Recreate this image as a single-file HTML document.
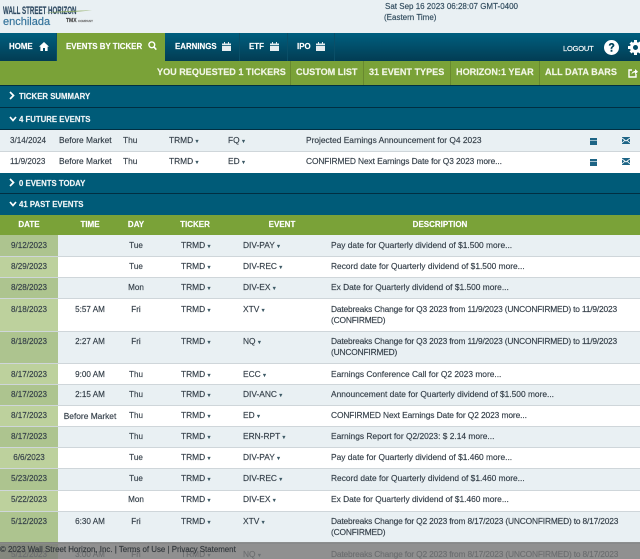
<!DOCTYPE html>
<html><head><meta charset="utf-8"><style>
html,body{margin:0;padding:0;background:#e9f0f3}
#p{position:relative;width:640px;height:559px;overflow:hidden;background:#e9f0f3;font-family:"Liberation Sans",sans-serif;font-size:8.4px;color:#333e48;filter:blur(.3px)}
#p div,#p span,#p svg{position:absolute}
span{white-space:nowrap;line-height:10px;-webkit-text-stroke:.15px}
.tab{top:33px;height:28px;background:linear-gradient(#005f7f,#023c53);border-right:1px solid #0a4f68;box-sizing:border-box}
.w{color:#fff;font-weight:bold;font-size:7.9px;margin-top:1px}
.g{color:#f2f6e6;font-weight:bold;font-size:9.1px;top:67px}
.sep{top:61px;width:1px;height:24px;background:#68892f}
.bar{left:0;width:640px;background:#005b78;border-bottom:1px solid #012f42;border-top:1px solid #012f42;box-sizing:border-box}
.bt{left:19px;color:#f0f5f7;font-weight:bold;font-size:7.8px;margin-top:1px}
.r{left:0;width:640px;box-sizing:border-box;border-bottom:1px solid #cfd6da}
.a{background:#e9f0f3}.b{background:#fff}
.d{left:0;width:58px;box-sizing:border-box}
.da{background:#adc48f}.db{background:#bdd19d}
.c{transform:translateX(-50%);font-size:8.1px;margin-top:1px}
.t{color:#fff;font-weight:bold;top:220px;font-size:8px;transform:translateX(-50%)}
.m{color:#3d5a66;font-size:6px}
.l{letter-spacing:-.17px}
.k{letter-spacing:-.1px}
.n{font-size:8.1px;margin-top:1px}
</style></head><body><div id="p">

<span style="left:3px;top:6px;font-size:11px;font-weight:bold;color:#2f4a62;transform:scaleX(.56);transform-origin:0 0;line-height:11px">WALL STREET HORIZON</span>
<svg style="left:44px;top:9px" width="50" height="5" viewBox="0 0 50 5"><path d="M0 3.5C15 2.5 35 1.5 48 1.5C35 2.5 20 3.5 0 3.5Z" fill="#8aa85a"/></svg>
<span style="left:3px;top:16px;font-size:11px;color:#33729a;line-height:12px">enchilada</span>
<span style="left:66px;top:18px;font-size:5px;color:#444;font-weight:bold;line-height:6px">TMX</span>
<span style="left:78px;top:19px;font-size:3px;color:#666;line-height:4px">COMPANY</span>

<span style="left:385px;top:2px;color:#2f4a5c;font-size:8px">Sat Sep 16 2023 06:28:07 GMT-0400</span>
<span style="left:384px;top:13px;color:#2f4a5c;font-size:8px">(Eastern Time)</span>

<div class="tab" style="left:0;width:640px;border:0"></div>
<div class="tab" style="left:0;width:57px"></div>
<div class="tab" style="left:165px;width:75px"></div>
<div class="tab" style="left:240px;width:48px"></div>
<div class="tab" style="left:288px;width:47px"></div>
<div style="left:57px;top:33px;width:108px;height:28px;background:#7aa238"></div>

<span class="w" style="left:9px;top:41px">HOME</span>
<svg style="left:39px;top:42px" width="10" height="9" viewBox="0 0 10 9"><path d="M5 0L10 4.6H8.6V9H6V6H4V9H1.4V4.6H0Z" fill="#fff"/></svg>
<span class="w" style="left:66px;top:41px">EVENTS BY TICKER</span>
<svg style="left:148px;top:41px" width="9" height="10" viewBox="0 0 9 10"><circle cx="3.8" cy="3.8" r="2.9" fill="none" stroke="#fff" stroke-width="1.4"/><path d="M5.8 5.8L8.3 8.6" stroke="#fff" stroke-width="1.6"/></svg>
<span class="w" style="left:175px;top:41px">EARNINGS</span>
<svg style="left:222px;top:42px" width="9" height="9" viewBox="0 0 9 9"><path d="M0 1.5H9V3.2H0ZM0 4H9V9H0ZM2 0H3V1.5H2ZM6 0H7V1.5H6Z" fill="#e6edf0"/></svg>
<span class="w" style="left:249px;top:41px">ETF</span>
<svg style="left:270px;top:42px" width="9" height="9" viewBox="0 0 9 9"><path d="M0 1.5H9V3.2H0ZM0 4H9V9H0ZM2 0H3V1.5H2ZM6 0H7V1.5H6Z" fill="#e6edf0"/></svg>
<span class="w" style="left:297px;top:41px">IPO</span>
<svg style="left:316px;top:42px" width="9" height="9" viewBox="0 0 9 9"><path d="M0 1.5H9V3.2H0ZM0 4H9V9H0ZM2 0H3V1.5H2ZM6 0H7V1.5H6Z" fill="#e6edf0"/></svg>

<span style="left:563px;top:44px;color:#fff;font-size:7.5px;letter-spacing:-.2px">LOGOUT</span>
<svg style="left:604px;top:40px" width="15" height="15" viewBox="0 0 15 15"><circle cx="7.5" cy="7.5" r="7.5" fill="#fff"/><path d="M4.8 5.6C4.9 3.8 6.1 3 7.6 3C9.2 3 10.4 4 10.4 5.3C10.4 7.2 8.3 7 8.3 8.9H6.6C6.6 6.4 8.5 6.5 8.5 5.4C8.5 4.9 8.1 4.6 7.6 4.6C7 4.6 6.7 5 6.6 5.6ZM6.6 9.8H8.4V11.7H6.6Z" fill="#03445c"/></svg>
<svg style="left:628px;top:40px" width="15" height="15" viewBox="0 0 15 15"><circle cx="7.5" cy="7.5" r="4" fill="none" stroke="#fff" stroke-width="3"/><path d="M6 0H9V3H6ZM6 12H9V15H6ZM0 6H3V9H0ZM12 6H15V9H12ZM1.5 3.6L3.6 1.5L5.3 3.3L3.3 5.3ZM9.7 11.7L11.7 9.7L13.5 11.4L11.4 13.5ZM1.5 11.4L3.3 9.7L5.3 11.7L3.6 13.5ZM9.7 3.3L11.4 1.5L13.5 3.6L11.7 5.3Z" fill="#fff"/></svg>

<div style="left:0;top:61px;width:640px;height:24px;background:#7aa238"></div>
<div class="sep" style="left:290px"></div><div class="sep" style="left:363px"></div><div class="sep" style="left:450px"></div><div class="sep" style="left:539px"></div>
<span class="g" style="left:157px">YOU REQUESTED 1 TICKERS</span>
<span class="g" style="left:296px">CUSTOM LIST</span>
<span class="g" style="left:369px">31 EVENT TYPES</span>
<span class="g" style="left:456px">HORIZON:1 YEAR</span>
<span class="g" style="left:545px">ALL DATA BARS</span>
<svg style="left:628px;top:68px" width="10" height="10" viewBox="0 0 10 10"><path d="M4 2H1V9H8V6" fill="none" stroke="#fff" stroke-width="1.4"/><path d="M3.5 6.5C3.8 4 5.5 3 7 3V1L10 3.7L7 6.4V4.5C5.5 4.5 4.3 5.2 3.5 6.5Z" fill="#fff"/></svg>

<div class="bar" style="top:85px;height:23px"></div>
<div class="bar" style="top:107px;height:23px"></div>
<div class="bar" style="top:172px;height:22px"></div>
<div class="bar" style="top:193px;height:23px;border-bottom:0"></div>
<svg style="left:9px;top:91px" width="6" height="9" viewBox="0 0 6 9"><path d="M1 1L4.5 4.5L1 8" fill="none" stroke="#fff" stroke-width="1.7"/></svg>
<svg style="left:9px;top:116px" width="8" height="6" viewBox="0 0 8 6"><path d="M1 1L4 4.5L7 1" fill="none" stroke="#fff" stroke-width="1.7"/></svg>
<svg style="left:9px;top:178px" width="6" height="9" viewBox="0 0 6 9"><path d="M1 1L4.5 4.5L1 8" fill="none" stroke="#fff" stroke-width="1.7"/></svg>
<svg style="left:9px;top:201px" width="8" height="6" viewBox="0 0 8 6"><path d="M1 1L4 4.5L7 1" fill="none" stroke="#fff" stroke-width="1.7"/></svg>
<span class="bt" style="top:91px">TICKER SUMMARY</span>
<span class="bt" style="top:114px">4 FUTURE EVENTS</span>
<span class="bt" style="top:178px">0 EVENTS TODAY</span>
<span class="bt" style="top:199px">41 PAST EVENTS</span>

<div class="r a" style="top:130px;height:22px"></div>
<div class="r b" style="top:152px;height:21px;border-bottom:0"></div>
<span class="n" style="left:10px;top:135px">3/14/2024</span><span style="left:59px;top:135px">Before Market</span><span style="left:123px;top:135px">Thu</span><span style="left:169px;top:135px">TRMD <span class="m" style="position:static">▾</span></span><span style="left:228px;top:135px">FQ <span class="m" style="position:static">▾</span></span><span style="left:306px;top:135px">Projected Earnings Announcement for Q4 2023</span>
<span class="n" style="left:10px;top:156px">11/9/2023</span><span style="left:59px;top:156px">Before Market</span><span style="left:123px;top:156px">Thu</span><span style="left:169px;top:156px">TRMD <span class="m" style="position:static">▾</span></span><span style="left:228px;top:156px">ED <span class="m" style="position:static">▾</span></span><span class="k" style="left:306px;top:156px">CONFIRMED Next Earnings Date for Q3 2023 more...</span>
<svg style="left:590px;top:137px" width="7" height="8" viewBox="0 0 7 8"><path d="M0 1H7V3H0ZM0 3.6H7V8H0Z" fill="#1d6485"/></svg>
<svg style="left:622px;top:137px" width="8" height="7" viewBox="0 0 8 7"><path d="M0 0H8V7H0Z" fill="#1d6485"/><path d="M0 1L4 4L8 1M0 6L3 3.2M8 6L5 3.2" fill="none" stroke="#fff" stroke-width=".8"/></svg>
<svg style="left:590px;top:158px" width="7" height="8" viewBox="0 0 7 8"><path d="M0 1H7V3H0ZM0 3.6H7V8H0Z" fill="#1d6485"/></svg>
<svg style="left:622px;top:158px" width="8" height="7" viewBox="0 0 8 7"><path d="M0 0H8V7H0Z" fill="#1d6485"/><path d="M0 1L4 4L8 1M0 6L3 3.2M8 6L5 3.2" fill="none" stroke="#fff" stroke-width=".8"/></svg>

<div style="left:0;top:215px;width:640px;height:20px;background:#7aa238"></div>
<span class="t" style="left:29px">DATE</span><span class="t" style="left:90px">TIME</span><span class="t" style="left:136px">DAY</span><span class="t" style="left:195px">TICKER</span><span class="t" style="left:282px">EVENT</span><span class="t" style="left:440px">DESCRIPTION</span>

<div class="r a" style="top:235px;height:22px"></div><div class="d da" style="top:235px;height:21px"></div>
<div class="r b" style="top:257px;height:21px"></div><div class="d db" style="top:257px;height:20px"></div>
<div class="r a" style="top:278px;height:21px"></div><div class="d da" style="top:278px;height:20px"></div>
<div class="r b" style="top:299px;height:33px"></div><div class="d db" style="top:299px;height:32px"></div>
<div class="r a" style="top:332px;height:32px"></div><div class="d da" style="top:332px;height:31px"></div>
<div class="r b" style="top:364px;height:21px"></div><div class="d db" style="top:364px;height:20px"></div>
<div class="r a" style="top:385px;height:21px"></div><div class="d da" style="top:385px;height:20px"></div>
<div class="r b" style="top:406px;height:21px"></div><div class="d db" style="top:406px;height:20px"></div>
<div class="r a" style="top:427px;height:21px"></div><div class="d da" style="top:427px;height:20px"></div>
<div class="r b" style="top:448px;height:21px"></div><div class="d db" style="top:448px;height:20px"></div>
<div class="r a" style="top:469px;height:22px"></div><div class="d da" style="top:469px;height:21px"></div>
<div class="r b" style="top:491px;height:21px"></div><div class="d db" style="top:491px;height:20px"></div>
<div class="r a" style="top:512px;height:32px"></div><div class="d da" style="top:512px;height:31px"></div>
<div class="r b" style="top:544px;height:15px;border:0"></div><div class="d db" style="top:544px;height:15px"></div>

<span class="c" style="left:29px;top:240px">9/12/2023</span><span class="c" style="left:136px;top:240px">Tue</span><span style="left:181px;top:240px">TRMD <span class="m" style="position:static">▾</span></span><span style="left:243px;top:240px">DIV-PAY <span class="m" style="position:static">▾</span></span><span style="left:331px;top:240px">Pay date for Quarterly dividend of $1.500 more...</span>
<span class="c" style="left:29px;top:261px">8/29/2023</span><span class="c" style="left:136px;top:261px">Tue</span><span style="left:181px;top:261px">TRMD <span class="m" style="position:static">▾</span></span><span style="left:243px;top:261px">DIV-REC <span class="m" style="position:static">▾</span></span><span style="left:331px;top:261px">Record date for Quarterly dividend of $1.500 more...</span>
<span class="c" style="left:29px;top:282px">8/28/2023</span><span class="c" style="left:136px;top:282px">Mon</span><span style="left:181px;top:282px">TRMD <span class="m" style="position:static">▾</span></span><span style="left:243px;top:282px">DIV-EX <span class="m" style="position:static">▾</span></span><span style="left:331px;top:282px">Ex Date for Quarterly dividend of $1.500 more...</span>
<span class="c" style="left:29px;top:304px">8/18/2023</span><span class="c" style="left:90px;top:304px">5:57 AM</span><span class="c" style="left:136px;top:304px">Fri</span><span style="left:181px;top:304px">TRMD <span class="m" style="position:static">▾</span></span><span style="left:243px;top:304px">XTV <span class="m" style="position:static">▾</span></span><span class="l" style="left:331px;top:304px">Datebreaks Change for Q3 2023 from 11/9/2023 (UNCONFIRMED) to 11/9/2023</span><span class="l" style="left:331px;top:315px">(CONFIRMED)</span>
<span class="c" style="left:29px;top:336px">8/18/2023</span><span class="c" style="left:90px;top:336px">2:27 AM</span><span class="c" style="left:136px;top:336px">Fri</span><span style="left:181px;top:336px">TRMD <span class="m" style="position:static">▾</span></span><span style="left:243px;top:336px">NQ <span class="m" style="position:static">▾</span></span><span class="l" style="left:331px;top:336px">Datebreaks Change for Q3 2023 from 11/9/2023 (UNCONFIRMED) to 11/9/2023</span><span class="l" style="left:331px;top:347px">(UNCONFIRMED)</span>
<span class="c" style="left:29px;top:369px">8/17/2023</span><span class="c" style="left:90px;top:369px">9:00 AM</span><span class="c" style="left:136px;top:369px">Thu</span><span style="left:181px;top:369px">TRMD <span class="m" style="position:static">▾</span></span><span style="left:243px;top:369px">ECC <span class="m" style="position:static">▾</span></span><span style="left:331px;top:369px">Earnings Conference Call for Q2 2023 more...</span>
<span class="c" style="left:29px;top:389px">8/17/2023</span><span class="c" style="left:90px;top:389px">2:15 AM</span><span class="c" style="left:136px;top:389px">Thu</span><span style="left:181px;top:389px">TRMD <span class="m" style="position:static">▾</span></span><span style="left:243px;top:389px">DIV-ANC <span class="m" style="position:static">▾</span></span><span style="left:331px;top:389px">Announcement date for Quarterly dividend of $1.500 more...</span>
<span class="c" style="left:29px;top:410px">8/17/2023</span><span class="c" style="left:90px;top:410px;font-size:8.4px">Before Market</span><span class="c" style="left:136px;top:410px">Thu</span><span style="left:181px;top:410px">TRMD <span class="m" style="position:static">▾</span></span><span style="left:243px;top:410px">ED <span class="m" style="position:static">▾</span></span><span class="k" style="left:331px;top:410px">CONFIRMED Next Earnings Date for Q2 2023 more...</span>
<span class="c" style="left:29px;top:431px">8/17/2023</span><span class="c" style="left:136px;top:431px">Thu</span><span style="left:181px;top:431px">TRMD <span class="m" style="position:static">▾</span></span><span style="left:243px;top:431px">ERN-RPT <span class="m" style="position:static">▾</span></span><span style="left:331px;top:431px">Earnings Report for Q2/2023: $ 2.14 more...</span>
<span class="c" style="left:29px;top:452px">6/6/2023</span><span class="c" style="left:136px;top:452px">Tue</span><span style="left:181px;top:452px">TRMD <span class="m" style="position:static">▾</span></span><span style="left:243px;top:452px">DIV-PAY <span class="m" style="position:static">▾</span></span><span style="left:331px;top:452px">Pay date for Quarterly dividend of $1.460 more...</span>
<span class="c" style="left:29px;top:473px">5/23/2023</span><span class="c" style="left:136px;top:473px">Tue</span><span style="left:181px;top:473px">TRMD <span class="m" style="position:static">▾</span></span><span style="left:243px;top:473px">DIV-REC <span class="m" style="position:static">▾</span></span><span style="left:331px;top:473px">Record date for Quarterly dividend of $1.460 more...</span>
<span class="c" style="left:29px;top:494px">5/22/2023</span><span class="c" style="left:136px;top:494px">Mon</span><span style="left:181px;top:494px">TRMD <span class="m" style="position:static">▾</span></span><span style="left:243px;top:494px">DIV-EX <span class="m" style="position:static">▾</span></span><span style="left:331px;top:494px">Ex Date for Quarterly dividend of $1.460 more...</span>
<span class="c" style="left:29px;top:516px">5/12/2023</span><span class="c" style="left:90px;top:516px">6:30 AM</span><span class="c" style="left:136px;top:516px">Fri</span><span style="left:181px;top:516px">TRMD <span class="m" style="position:static">▾</span></span><span style="left:243px;top:516px">XTV <span class="m" style="position:static">▾</span></span><span class="l" style="left:331px;top:516px">Datebreaks Change for Q2 2023 from 8/17/2023 (UNCONFIRMED) to 8/17/2023</span><span class="l" style="left:331px;top:527px">(CONFIRMED)</span>
<span class="c" style="left:29px;top:549px">5/12/2023</span><span class="c" style="left:90px;top:549px">3:00 AM</span><span class="c" style="left:136px;top:549px">Fri</span><span style="left:181px;top:549px">TRMD <span class="m" style="position:static">▾</span></span><span style="left:243px;top:549px">NQ <span class="m" style="position:static">▾</span></span><span class="l" style="left:331px;top:549px">Datebreaks Change for Q2 2023 from 8/17/2023 (UNCONFIRMED) to 8/17/2023</span>

<div style="left:0;top:542px;width:640px;height:17px;background:rgba(120,120,120,.82)"></div>
<span style="left:0;top:545px;color:#33393d;font-size:7.9px">© 2023 Wall Street Horizon, Inc. | Terms of Use | Privacy Statement</span>
</div></body></html>
